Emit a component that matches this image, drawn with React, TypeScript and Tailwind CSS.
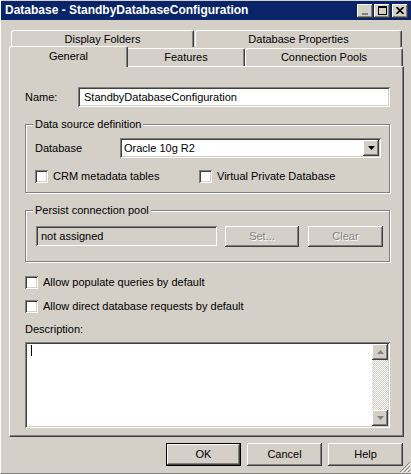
import React from "react";

// win2000-ish bevels
const raised =
  "shadow-[inset_-1px_-1px_#404040,inset_1px_1px_#ffffff,inset_-2px_-2px_#808080,inset_2px_2px_#d4d0c8]";
const sunken =
  "shadow-[inset_1px_1px_#808080,inset_-1px_-1px_#ffffff,inset_2px_2px_#404040,inset_-2px_-2px_#d4d0c8]";
const etched = "border border-[#808080] shadow-[1px_1px_0_#ffffff,inset_1px_1px_0_#ffffff]";

const Check = ({ label, className = "" }: { label: string; className?: string }) => (
  <div className={`flex items-center gap-[5px] ${className}`}>
    <span className={`w-[13px] h-[13px] bg-white ${sunken}`} />
    <span>{label}</span>
  </div>
);

const Btn = ({
  label,
  disabled,
  isDefault,
  className = "",
}: {
  label: string;
  disabled?: boolean;
  isDefault?: boolean;
  className?: string;
}) => (
  <div
    className={`flex items-center justify-center bg-[#d4d0c8] ${
      isDefault ? "border border-black" : ""
    } ${raised} ${className}`}
  >
    <span className={disabled ? "text-[#808080] [text-shadow:1px_1px_0_#ffffff]" : "text-black"}>
      {label}
    </span>
  </div>
);

const Arrow = ({ up, color = "#000" }: { up?: boolean; color?: string }) => (
  <svg width="7" height="4" viewBox="0 0 7 4">
    {up ? <path d="M3.5 0 L7 4 L0 4 Z" fill={color} /> : <path d="M0 0 L7 0 L3.5 4 Z" fill={color} />}
  </svg>
);

const Group = ({
  title,
  className = "",
  children,
}: {
  title: string;
  className?: string;
  children: React.ReactNode;
}) => (
  <div className={`relative ${etched} ${className}`}>
    <span className="absolute left-[7px] -top-[8px] px-[2px] bg-[#d4d0c8] leading-[14px]">{title}</span>
    {children}
  </div>
);

export default function App() {
  return (
    <div className="w-[411px] h-[474px] bg-[#d4d0c8] flex flex-col text-[11px] leading-[13px] text-black font-['Liberation_Sans',Arial,sans-serif] border-l border-l-white border-b border-b-[#808080] overflow-hidden">
      {/* title bar */}
      <div className="h-[19px] mt-[1px] bg-[#0a246a] flex items-center justify-between pl-[4px] pr-[3px]">
        <span className="text-white font-bold text-[12px]">Database - StandbyDatabaseConfiguration</span>
        <div className="flex">
          <div className={`w-[16px] h-[14px] bg-[#d4d0c8] ${raised} flex items-end justify-center pb-[3px]`}>
            <span className="w-[6px] h-[2px] bg-[#808080] ml-[-1px]" />
          </div>
          <div className={`w-[16px] h-[14px] bg-[#d4d0c8] ${raised} flex items-center justify-center ml-[1px]`}>
            <span className="w-[9px] h-[9px] border border-black border-t-2" />
          </div>
          <div className={`w-[16px] h-[14px] bg-[#d4d0c8] ${raised} flex items-center justify-center ml-[2px]`}>
            <svg width="8" height="7" viewBox="0 0 8 7">
              <path d="M0.5 0 L7.5 7 M7.5 0 L0.5 7" stroke="#000" strokeWidth="1.6" />
            </svg>
          </div>
        </div>
      </div>

      {/* tabs */}
      <div className="flex pl-[10px] mt-[10px] h-[17px]">
        <div className="w-[183px] flex items-center justify-center rounded-tl-[3px] rounded-tr-[2px] border-l border-t border-white border-r border-r-[#404040] shadow-[inset_-1px_0_#808080]">
          Display Folders
        </div>
        <div className="w-[207px] ml-[1px] flex items-center justify-center rounded-tl-[3px] rounded-tr-[2px] border-l border-t border-white border-r border-r-[#404040] shadow-[inset_-1px_0_#808080]">
          Database Properties
        </div>
      </div>
      <div className="flex items-end pl-[8px] h-[19px]">
        <div className="relative z-10 w-[119px] h-[21px] -mb-[1px] bg-[#d4d0c8] flex items-center justify-center pb-[1px] rounded-tl-[3px] rounded-tr-[2px] border-l border-t border-white border-r border-r-[#404040] shadow-[inset_-1px_0_#808080]">
          General
        </div>
        <div className="w-[117px] h-[18px] flex items-center justify-center rounded-tr-[2px] border-t border-white border-r border-r-[#404040] shadow-[inset_-1px_0_#808080]">
          Features
        </div>
        <div className="w-[158px] h-[18px] flex items-center justify-center rounded-tl-[3px] rounded-tr-[2px] border-l border-t border-white border-r border-r-[#404040] shadow-[inset_-1px_0_#808080]">
          Connection Pools
        </div>
      </div>

      {/* panel */}
      <div className="ml-[8px] w-[395px] h-[371px] flex flex-col pl-[15px] pr-[13px] border-l border-t border-white border-r border-b border-r-[#404040] border-b-[#404040] shadow-[inset_-1px_-1px_#808080]">
        <div className="flex items-center mt-[20px] h-[20px]">
          <span className="w-[53px]">Name:</span>
          <div className={`flex-1 h-[20px] bg-white ${sunken} flex items-center pl-[6px]`}>
            StandbyDatabaseConfiguration
          </div>
        </div>

        <Group title="Data source definition" className="mt-[17px] h-[69px] pt-[13px] pl-[9px] pr-[8px]">
          <div className="flex items-center h-[20px]">
            <span className="w-[85px]">Database</span>
            <div className={`flex-1 h-[20px] bg-white ${sunken} flex items-center justify-between pl-[4px] pr-[2px]`}>
              <span>Oracle 10g R2</span>
              <div className={`w-[16px] h-[16px] bg-[#d4d0c8] ${raised} flex items-center justify-center`}>
                <Arrow />
              </div>
            </div>
          </div>
          <div className="flex mt-[12px] h-[13px]">
            <Check label="CRM metadata tables" className="w-[164px]" />
            <Check label="Virtual Private Database" />
          </div>
        </Group>

        <Group title="Persist connection pool" className="mt-[17px] h-[52px] pt-[15px] pl-[10px]">
          <div className="flex items-start">
            <div className={`w-[181px] h-[20px] ${sunken} flex items-center pl-[5px]`}>not assigned</div>
            <Btn label="Set..." disabled className="w-[74px] h-[21px] ml-[8px]" />
            <Btn label="Clear" disabled className="w-[75px] h-[21px] ml-[9px]" />
          </div>
        </Group>

        <Check label="Allow populate queries by default" className="mt-[14px] h-[13px]" />
        <Check label="Allow direct database requests by default" className="mt-[11px] h-[13px]" />

        <span className="mt-[10px]">Description:</span>

        <div className={`mt-[6px] h-[86px] bg-white ${sunken} flex p-[2px]`}>
          <div className="flex-1 pl-[4px] pt-[1px]">
            <span className="block w-[1px] h-[11px] bg-black" />
          </div>
          <div className="w-[16px] flex flex-col bg-[repeating-conic-gradient(#d4d0c8_0%_25%,#ffffff_0%_50%)] bg-size-[2px_2px]">
            <div className={`h-[16px] bg-[#d4d0c8] ${raised} flex items-center justify-center`}>
              <Arrow up color="#808080" />
            </div>
            <div className="flex-1" />
            <div className={`h-[16px] bg-[#d4d0c8] ${raised} flex items-center justify-center`}>
              <Arrow color="#808080" />
            </div>
          </div>
        </div>
      </div>

      {/* buttons */}
      <div className="flex items-end justify-end mt-[6px] pr-[8px] gap-[6px] relative">
        <Btn label="OK" isDefault className="w-[75px] h-[23px]" />
        <Btn label="Cancel" className="w-[75px] h-[23px]" />
        <Btn label="Help" className="w-[75px] h-[23px]" />
        <svg className="absolute right-0 bottom-[-7px]" width="12" height="12" viewBox="0 0 12 12">
          <path d="M11 1 L1 11 M11 5 L5 11 M11 9 L9 11" stroke="#808080" strokeWidth="1" />
          <path d="M12 2 L2 12 M12 6 L6 12 M12 10 L10 12" stroke="#ffffff" strokeWidth="1" />
        </svg>
      </div>
    </div>
  );
}
